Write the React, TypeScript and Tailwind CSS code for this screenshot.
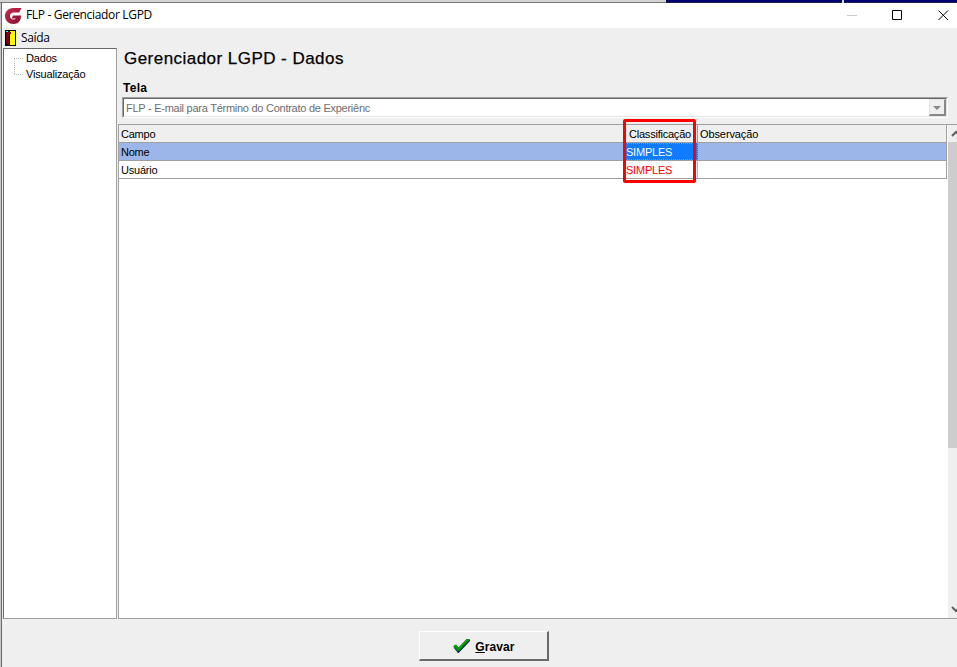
import React from 'react';

interface Row {
  campo: string;
  classificacao: string;
  observacao: string;
}

const rows: Row[] = [
  { campo: 'Nome', classificacao: 'SIMPLES', observacao: '' },
  { campo: 'Usuário', classificacao: 'SIMPLES', observacao: '' }
];

const Logo = () => (
  <svg width="18" height="18" viewBox="0 0 18 18" className="shrink-0">
    <defs>
      <linearGradient id="logo" x1="0" y1="0" x2="1" y2="1">
        <stop offset="0" stopColor="#cf2a50" />
        <stop offset="1" stopColor="#7d1230" />
      </linearGradient>
    </defs>
    <path d="M17.500 1H9.500C4.500 1 1 4.500 1 9s3.500 8 8.500 8c4.800 0 7.500-3 7.500-8.500H9L7.500 11.500h4.500c-.6.700-1.400 1-2.500 1C7.300 12.500 6 11 6 9s1.400-3.500 3.800-3.500h5.400z" fill="url(#logo)" />
  </svg>
);

const DoorIcon = () => (
  <svg width="11" height="16" viewBox="0 0 11 16" className="shrink-0" shapeRendering="crispEdges">
    <path d="M0 0h11v16H0z" fill="#000" />
    <path d="M4 1h6v14H4z" fill="#ff0" />
    <path d="M1 2h2l2 1v12H3l-2-2z" fill="#800000" />
    <path d="M4 4h1v11H4zM3 7h1v1H3z" fill="#000" />
    <path d="M1 1h2v1H1z" fill="#0ff" />
    <path d="M4 1h1v1h1v2H5V3H4z" fill="#800000" />
  </svg>
);

const CheckIcon = () => (
  <svg width="17" height="15" viewBox="0 0 17 15" className="shrink-0">
    <path d="M1 8.500l1.500-1 2.500 3L14 1.500h3V3L7 13.500 5.500 15H5L1 10z" fill="#000080" />
    <path d="M.5 8L2 6.800h1.500L5.500 9.500 13.500 1H16v1.500L6 13.500H4.500L.5 9z" fill="#008a00" />
    <path d="M1 8h2l2.500 3L14.500 1.500" stroke="#00c000" fill="none" />
  </svg>
);

const TitleBar = () => (
  <header className="flex h-[25px] shrink-0 items-center bg-white pl-[2px] font-['Open_Sans',sans-serif]">
    <Logo />
    <h1 className="ml-1 pb-px text-[12px] leading-4 tracking-[-0.33px] whitespace-nowrap">FLP - Gerenciador LGPD</h1>
    <svg width="104" height="12" viewBox="0 0 104 12" className="mr-[7px] mb-[2px] ml-auto" fill="none">
      <path d="M1 6.500h10" stroke="#ccc" />
      <path d="M46.500 1.500h9v9h-9z" stroke="#000" />
      <path d="M92.500 1.500l9.500 9.500m0-9.500l-9.500 9.500" stroke="#000" />
    </svg>
  </header>
);

const Sidebar = () => (
  <aside className="w-[114px] shrink-0 border border-t-[#696969] border-r-[#a0a0a0] border-b-[#a0a0a0] border-l-[#696969] bg-white">
    <nav className="relative pt-[1px] pl-[22px] text-[11px] leading-4 tracking-[-0.18px]">
      <svg width="10" height="18" viewBox="0 0 10 18" className="absolute top-[9px] left-[10px]">
        <path d="M.5 1v16M0 .5h9M0 16.500h9" stroke="#bbb" strokeDasharray="1 1" fill="none" />
      </svg>
      <p>Dados</p>
      <p>Visualização</p>
    </nav>
  </aside>
);

const ScreenSelect = () => (
  <div className="mr-[9px] ml-1 h-[21px] border border-t-[#a0a0a0] border-r-white border-b-white border-l-[#a0a0a0]">
    <div className="flex h-[19px] border border-t-[#696969] border-r-[#e3e3e3] border-b-[#e3e3e3] border-l-[#696969] bg-white">
      <p className="grow pl-[2px] text-[11px] leading-[19px] tracking-[-0.26px] text-[#6d6d6d]">
        FLP - E-mail para Término do Contrato de Experiênc
      </p>
      <div className="flex w-[17px] items-center justify-center border-t border-r-2 border-b-2 border-l border-[#888] border-t-[#e3e3e3] border-l-[#e3e3e3] bg-[#efefef]">
        <svg width="8" height="4" viewBox="0 0 8 4" className="mt-px">
          <path d="M0 0h8L4 4z" fill="#888" />
        </svg>
      </div>
    </div>
  </div>
);

const Grid = () => (
  <div className="relative mt-[6px] flex grow border-t border-b border-l border-[#a0a0a0] bg-white">
    <div className="mr-px w-[828px] shrink-0 text-[11px] tracking-[-0.22px]">
      <div className="grid h-[18px] grid-cols-[505px_74px_1fr] border-r border-b border-[#a0a0a0] bg-[#efefef] leading-[18px]">
        <p className="border-r border-[#a0a0a0] pl-[2px]">Campo</p>
        <p className="border-r border-[#a0a0a0] pl-[5px]">Classificação</p>
        <p className="pl-[2px] tracking-[-0.1px]">Observação</p>
      </div>
      {rows.map((row, i) => (
        <div
          key={row.campo}
          className={`grid h-[18px] grid-cols-[505px_74px_1fr] border-r border-b border-[#a0a0a0] leading-[18px] ${i === 0 ? 'bg-[#9cb6e9]' : ''}`}
        >
          <p className="h-[17px] border-r border-[#b8b8b8] pl-[2px]">{row.campo}</p>
          {i === 0 ? (
            <p className="h-[17px] border border-dotted border-[#f09020] bg-[#0f7bff] pl-px leading-4 text-white">{row.classificacao}</p>
          ) : (
            <p className="h-[17px] border-r border-[#b8b8b8] pl-[2px] text-[#ff0000]">{row.classificacao}</p>
          )}
          <p className="pl-[2px]">{row.observacao}</p>
        </div>
      ))}
    </div>
    <div className="flex grow flex-col bg-[#efefef]">
      <svg width="9" height="17" viewBox="0 0 9 17">
        <path d="M4 11l4-4 4 4" stroke="#606060" strokeWidth="2" fill="none" />
      </svg>
      <div className="h-[306px] bg-[#cdcdcd]" />
      <svg width="9" height="17" viewBox="0 0 9 17" className="mt-auto">
        <path d="M4 6l4 4 4-4" stroke="#606060" strokeWidth="2" fill="none" />
      </svg>
    </div>
    <div className="absolute -top-[6px] left-[504px] h-[64px] w-[73px] rounded-[2px] border-3 border-[#fe0000]" />
  </div>
);

export default function App() {
  return (
    <div className="flex h-[667px] w-[957px] flex-col overflow-hidden bg-[#efefef] font-['Liberation_Sans',Arial,sans-serif] text-black">
      <div className="flex h-[3px] shrink-0">
        <div className="w-[666px] border-b border-[#777] bg-[#d4d4d4]" />
        <div className="w-[176px] border-b border-[#222250] bg-[#000070]" />
        <div className="w-[2px] bg-[#ddd]" />
        <div className="grow border-b border-[#222250] bg-[#000070]" />
      </div>
      <div className="flex grow flex-col border-l border-[#c8c8c8]">
        <div className="flex grow flex-col border-l border-[#696969]">
          <TitleBar />
          <div className="flex h-5 shrink-0 items-center pl-[3px]">
            <DoorIcon />
            <span className="ml-[5px] font-['Open_Sans',sans-serif] text-[12px] leading-4 tracking-[-0.33px]">Saída</span>
          </div>
          <main className="flex h-[571px] shrink-0 pl-[1px]">
            <Sidebar />
            <section className="ml-[1px] flex grow flex-col">
              <h2 className="pt-[1px] pl-[6px] text-[17px] leading-5 tracking-[0.46px] [-webkit-text-stroke:0.25px_black]">
                Gerenciador LGPD - Dados
              </h2>
              <p className="mt-[11px] mb-px pl-[5px] text-[12px] leading-4 font-bold tracking-[0.3px]">Tela</p>
              <ScreenSelect />
              <Grid />
            </section>
          </main>
          <footer className="flex grow items-start justify-center pt-3 pl-[8px]">
            <button className="flex h-[30px] w-[130px] items-center justify-center gap-[5px] border-t border-r-2 border-b-2 border-l border-[#696969] border-t-white border-l-white pl-[2px] text-[12px] font-bold tracking-[0.1px]">
              <CheckIcon />
              <span className="pt-[2px]"><span className="underline">G</span>ravar</span>
            </button>
          </footer>
        </div>
      </div>
    </div>
  );
}
